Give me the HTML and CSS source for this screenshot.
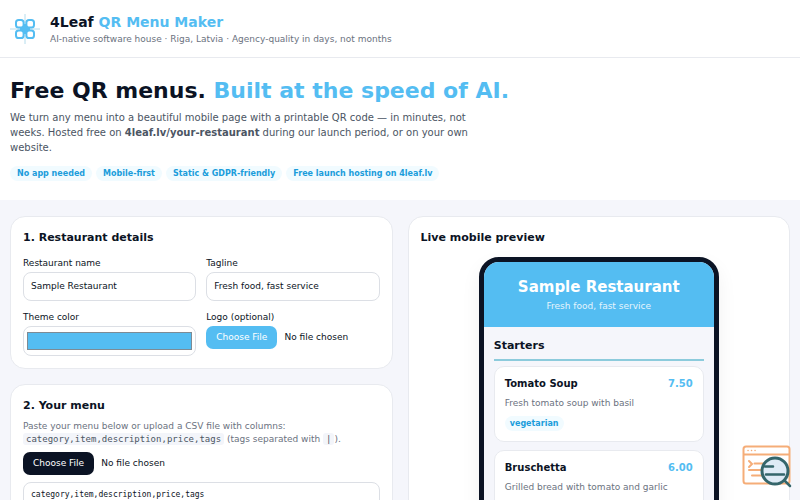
FILE: index.html
```html
<!DOCTYPE html>
<html lang="en">
<head>
    <meta charset="UTF-8">
    <meta name="viewport" content="width=device-width, initial-scale=1.0">
    <title>4Leaf QR Menu Maker</title>
    <link rel="stylesheet" href="styles.css">
</head>
<body>
    <header class="site-header">
        <svg class="logo" viewBox="0 0 30 30" fill="none" aria-hidden="true">
            <path d="M15 0v30M0 15h30" stroke="#b4dcec" stroke-width="1"/>
            <path d="M10 10h10v10h-10z" fill="#54bdf2"/>
            <g fill="#fff" stroke="#54bdf2" stroke-width="2">
                <rect x="6" y="6" width="7.600" height="7.600" rx="2.600"/>
                <rect x="16.400" y="6" width="7.600" height="7.600" rx="2.600"/>
                <rect x="6" y="16.400" width="7.600" height="7.600" rx="2.600"/>
                <rect x="16.400" y="16.400" width="7.600" height="7.600" rx="2.600"/>
            </g>
            <circle cx="15" cy="15" r="3.500" fill="#54bdf2"/>
        </svg>
        <div>
            <div class="brand">4Leaf <span>QR Menu Maker</span></div>
            <p class="brand-sub">AI-native software house · Riga, Latvia · Agency-quality in days, not months</p>
        </div>
    </header>

    <section class="hero">
        <h1>Free QR menus. <span>Built at the speed of AI.</span></h1>
        <p class="lead">We turn any menu into a beautiful mobile page with a printable QR code — in minutes, not weeks. Hosted free on <strong>4leaf.lv/your-restaurant</strong> during our launch period, or on your own website.</p>
        <div class="badges">
            <span class="badge">No app needed</span>
            <span class="badge">Mobile-first</span>
            <span class="badge">Static &amp; GDPR-friendly</span>
            <span class="badge">Free launch hosting on 4leaf.lv</span>
        </div>
    </section>

    <main class="layout">
        <div class="column">
            <section class="card">
                <h2>1. Restaurant details</h2>
                <div class="form-grid">
                    <div class="field">
                        <label for="name">Restaurant name</label>
                        <input class="text-input" id="name" type="text" value="Sample Restaurant">
                    </div>
                    <div class="field">
                        <label for="tagline">Tagline</label>
                        <input class="text-input" id="tagline" type="text" value="Fresh food, fast service">
                    </div>
                    <div class="field">
                        <label for="color">Theme color</label>
                        <input class="color-input" id="color" type="color" value="#54bdf2">
                    </div>
                    <div class="field">
                        <label for="logo">Logo (optional)</label>
                        <input class="file-input" id="logo" type="file" accept="image/*">
                    </div>
                </div>
            </section>

            <section class="card">
                <h2>2. Your menu</h2>
                <p class="hint">Paste your menu below or upload a CSV file with columns: <code>category,item,description,price,tags</code> (tags separated with <code>|</code>).</p>
                <input class="file-input dark" id="csv" type="file" accept=".csv" aria-label="CSV file">
                <textarea class="menu-text" id="menu" aria-label="Menu">category,item,description,price,tags
Starters,Tomato Soup,Fresh tomato soup with basil,7.50,vegetarian
Starters,Bruschetta,Grilled bread with tomato and garlic,6.00,vegetarian</textarea>
            </section>
        </div>

        <section class="card">
            <h2>Live mobile preview</h2>
            <div class="phone">
                <div class="phone-header">
                    <h3>Sample Restaurant</h3>
                    <p>Fresh food, fast service</p>
                </div>
                <div class="phone-body">
                    <h4>Starters</h4>
                    <article class="dish">
                        <div class="dish-top"><span>Tomato Soup</span><span class="price">7.50</span></div>
                        <p>Fresh tomato soup with basil</p>
                        <span class="badge tag">vegetarian</span>
                    </article>
                    <article class="dish">
                        <div class="dish-top"><span>Bruschetta</span><span class="price">6.00</span></div>
                        <p>Grilled bread with tomato and garlic</p>
                        <span class="badge tag">vegetarian</span>
                    </article>
                </div>
            </div>
        </section>
    </main>

    <svg class="inspect" viewBox="0 0 50 45" fill="none" stroke-linecap="round" aria-hidden="true">
        <g stroke="#f5ad78" stroke-width="2">
            <rect x="1.500" y="2.500" width="46" height="37" rx="2.500"/>
            <path d="M2 10.500h45M12.500 19.500h10M7 26h13M10 31.500h10"/>
            <path d="M6 6.500h.1M9.500 6.500h.1M13 6.500h.1" stroke-width="1.500"/>
            <path d="M7 17l3 3-3 3"/>
        </g>
        <circle cx="33" cy="27" r="13" fill="#dfebf6" stroke="#35666b" stroke-width="3"/>
        <path d="M42.500 36.500l5.500 5.500M23 22.500h8M24 30.500h18" stroke="#35666b" stroke-width="2.500"/>
    </svg>
</body>
</html>
```

FILE: styles.css
```css
:root {
    --brand: #54bdf2;
    --brand-dark: #1b9ddb;
    --brand-soft: #f1fbff;
    --ink: #0b1324;
    --muted: #6b7280;
    --text: #4b5563;
    --line: #e8eaef;
    --page: #f5f6fb;
}

* {
    box-sizing: border-box;
    margin: 0;
    padding: 0;
}

body {
    background: var(--page);
    color: var(--ink);
    font-family: "DejaVu Sans", sans-serif;
    font-size: 9px;
    line-height: 13px;
}

.site-header {
    display: flex;
    align-items: center;
    gap: 10px;
    padding: 12px 10px 11px;
    background: #fff;
    border-bottom: 1px solid var(--line);
}

.logo {
    width: 30px;
    height: 30px;
}

.brand {
    font-size: 14px;
    line-height: 21px;
    font-weight: bold;
}

.brand span,
.hero h1 span {
    color: var(--brand);
}

.brand-sub {
    color: var(--muted);
}

.hero {
    padding: 18px 10px 19px;
    background: #fff;
}

.hero h1 {
    font-size: 22px;
    line-height: 30px;
    margin-bottom: 4px;
}

.lead {
    max-width: 480px;
    color: var(--text);
    font-size: 10px;
    line-height: 15px;
}

.badges {
    display: flex;
    flex-wrap: wrap;
    gap: 4px;
    margin-top: 11px;
}

.badge {
    display: inline-block;
    padding: 1px 7px;
    border-radius: 99px;
    background: var(--brand-soft);
    color: var(--brand-dark);
    font-size: 8px;
    font-weight: bold;
}

.layout {
    display: grid;
    grid-template-columns: 1fr 1fr;
    gap: 15px;
    padding: 16px 10px;
}

.column {
    display: flex;
    flex-direction: column;
    gap: 15px;
}

.card {
    padding: 12px;
    background: #fff;
    border: 1px solid var(--line);
    border-radius: 15px;
}

.card h2 {
    font-size: 11px;
    line-height: 18px;
    margin-bottom: 5px;
}

.form-grid {
    display: grid;
    grid-template-columns: 1fr 1fr;
    gap: 10px;
    padding-top: 5px;
}

.field label {
    display: block;
    margin-bottom: 2px;
}

.text-input,
.color-input,
.menu-text {
    display: block;
    width: 100%;
    border: 1px solid #dcdfe5;
    border-radius: 8px;
    background: #fff;
    color: var(--ink);
}

.text-input {
    height: 29px;
    padding: 0 7px 1px;
    font: inherit;
}

.color-input {
    height: 30px;
    padding: 4px 3px;
}

.color-input::-webkit-color-swatch-wrapper {
    padding: 1px 0;
}

.color-input::-webkit-color-swatch {
    border: 1px solid #7d8b95;
}

.file-input {
    display: block;
    width: 100%;
    font: inherit;
}

.file-input::file-selector-button {
    height: 23px;
    margin-right: 7px;
    padding: 0 10px;
    border: 0;
    border-radius: 7px;
    background: var(--brand);
    color: #fff;
    font: inherit;
}

.file-input.dark::file-selector-button {
    background: var(--ink);
}

.hint {
    margin-bottom: 6px;
    color: var(--muted);
}

.hint code {
    padding: 1px 3px;
    border-radius: 3px;
    background: #f3f5fa;
    color: var(--text);
    font-family: "DejaVu Sans Mono", monospace;
}

.menu-text {
    height: 140px;
    margin-top: 7px;
    padding: 6px 7px;
    font-family: "DejaVu Sans Mono", monospace;
    font-size: 8px;
    line-height: 12px;
    resize: vertical;
}

.phone {
    max-width: 240px;
    margin: 10px auto 0;
    overflow: hidden;
    border: 5px solid var(--ink);
    border-radius: 20px;
    background: var(--page);
    box-shadow: 0 8px 20px rgba(11, 19, 36, 0.06);
}

.phone-header {
    padding: 14px 10px;
    background: var(--brand);
    color: #fff;
    text-align: center;
}

.phone-header h3 {
    font-size: 15px;
    line-height: 22px;
}

.phone-header p {
    margin-top: 2px;
    opacity: 0.85;
}

.phone-body {
    padding: 10px;
}

.phone-body h4 {
    margin-bottom: 5px;
    padding-bottom: 4px;
    border-bottom: 2px solid #8ccbdc;
    font-size: 11px;
    line-height: 18px;
}

.dish {
    margin-bottom: 8px;
    padding: 9px 10px 10px;
    background: #fff;
    border: 1px solid var(--line);
    border-radius: 10px;
}

.dish-top {
    display: flex;
    justify-content: space-between;
    font-size: 10px;
    line-height: 15px;
    font-weight: bold;
}

.price {
    color: var(--brand);
}

.dish p {
    margin: 6px 0;
    color: var(--muted);
}

.tag {
    padding: 1px 5px;
}

.inspect {
    position: fixed;
    right: 8px;
    bottom: 11px;
    width: 50px;
    height: 45px;
}
```
